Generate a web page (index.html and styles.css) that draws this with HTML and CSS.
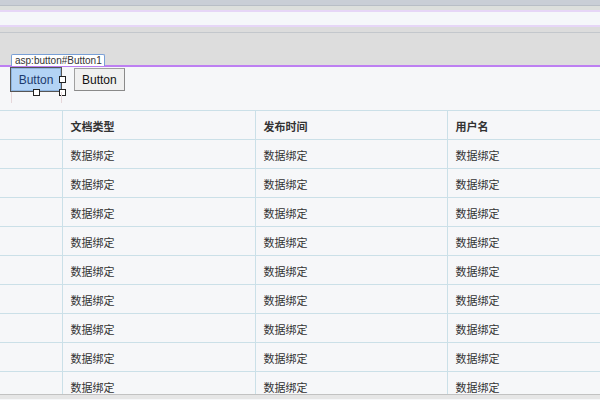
FILE: index.html
```html
<!DOCTYPE html>
<html>
<head>
<meta charset="utf-8">
<link rel="stylesheet" href="styles.css">
</head>
<body>
<div class="chrome">
  <div class="band-top"></div>
  <div class="band-sub"></div>
  <div class="band-white"></div>
  <div class="band-mid"></div>
  <div class="band-design"></div>
</div>
<div class="page">
  <span class="tag">asp:button#Button1</span>
  <div class="toolbar">
    <div class="btn-wrap">
      <button class="btn selected">Button</button>
      <span class="handle h-right"></span>
      <span class="handle h-bottom"></span>
      <span class="handle h-corner"></span>
      <span class="guide g-left"></span>
      <span class="guide g-right"></span>
    </div>
    <button class="btn">Button</button>
  </div>
  <div class="grid-wrap">
    <table class="grid">
      <colgroup>
        <col class="c0"><col class="c1"><col class="c2"><col class="c3">
      </colgroup>
      <thead>
        <tr><th></th><th>文档类型</th><th>发布时间</th><th>用户名</th></tr>
      </thead>
      <tbody>
        <tr><td></td><td>数据绑定</td><td>数据绑定</td><td>数据绑定</td></tr>
        <tr><td></td><td>数据绑定</td><td>数据绑定</td><td>数据绑定</td></tr>
        <tr><td></td><td>数据绑定</td><td>数据绑定</td><td>数据绑定</td></tr>
        <tr><td></td><td>数据绑定</td><td>数据绑定</td><td>数据绑定</td></tr>
        <tr><td></td><td>数据绑定</td><td>数据绑定</td><td>数据绑定</td></tr>
        <tr><td></td><td>数据绑定</td><td>数据绑定</td><td>数据绑定</td></tr>
        <tr><td></td><td>数据绑定</td><td>数据绑定</td><td>数据绑定</td></tr>
        <tr><td></td><td>数据绑定</td><td>数据绑定</td><td>数据绑定</td></tr>
        <tr><td></td><td>数据绑定</td><td>数据绑定</td><td>数据绑定</td></tr>
      </tbody>
    </table>
  </div>
</div>
<div class="statusbar"></div>
</body>
</html>
```
FILE: styles.css
```css
html, body {
  margin: 0;
  padding: 0;
  width: 600px;
  height: 400px;
  overflow: hidden;
  background: #f6f7f9;
  font-family: "Liberation Sans", "Noto Sans CJK SC", sans-serif;
}
.chrome { display: flex; flex-direction: column; }
.band-top { height: 5px; background: #c9ced6; border-bottom: 1px solid #b8bec6; }
.band-sub { height: 4px; background: #dcdfdc; border-bottom: 2px solid #e6d6f7; }
.band-white { height: 13px; background: #f5f7fa; border-bottom: 2px solid #e6d6f7; }
.band-mid { height: 5px; background: #dcdcdc; border-bottom: 1px solid #c3c7cc; }
.band-design { height: 32px; background: #dddddd; border-bottom: 2px solid #bd7ff2; }
.page {
  position: relative;
  height: 327px;
  background: #f6f7f9;
}
.tag {
  position: absolute;
  left: 11px;
  top: -13px;
  height: 11px;
  padding: 0 2px 0 3px;
  border: 1px solid #7aa0d6;
  border-bottom: none;
  border-radius: 2px 2px 0 0;
  background: #ffffff;
  font-size: 10px;
  line-height: 12px;
  color: #333;
}
.toolbar {
  display: flex;
  align-items: flex-start;
  gap: 12px;
  padding-left: 10px;
  height: 43px;
}
.btn-wrap { position: relative; }
.btn {
  display: block;
  margin: 1px 0 0 0;
  height: 23px;
  padding: 0 7px;
  border: 1px solid #a0a0a0;
  border-right-color: #8a8a8a;
  border-bottom-color: #8a8a8a;
  background: #f0f0f0;
  font-family: "Liberation Sans", sans-serif;
  font-size: 12px;
  color: #111;
}
.btn.selected {
  margin: 0;
  height: 25px;
  width: 52px;
  padding: 0;
  border: 1px solid #555;
  background: #b3d3f5;
  box-shadow: inset 0 0 0 1px #8eb5e0;
  color: #1d3a6e;
}
.handle {
  position: absolute;
  width: 5px;
  height: 5px;
  background: #fff;
  border: 1px solid #222;
}
.h-right { left: 49px; top: 9px; }
.h-bottom { left: 23px; top: 22px; }
.h-corner { left: 49px; top: 22px; }
.guide {
  position: absolute;
  top: 25px;
  width: 1px;
  height: 11px;
  background: #e6d7da;
}
.g-left { left: 1px; }
.g-right { left: 51px; }
.grid-wrap { overflow: hidden; height: 284px; }
.grid {
  border-collapse: collapse;
  table-layout: fixed;
  width: 640px;
  font-family: "Noto Sans CJK SC", "Liberation Sans", sans-serif;
  font-size: 11px;
  color: #333;
}
.c0 { width: 62px; }
.c1 { width: 193px; }
.c2 { width: 192px; }
.c3 { width: 193px; }
.grid th, .grid td {
  height: 27px;
  padding: 1px 0 0 8px;
  border: 1px solid #cbe0e8;
  border-left: none;
  text-align: left;
  white-space: nowrap;
  line-height: 14px;
}
.grid th + th, .grid td + td { border-left: 1px solid #cbe0e8; }
.grid th { font-weight: bold; }
.statusbar {
  height: 4px;
  border-top: 1px solid #c2c2c2;
  background: #e6e6e6;
}
```
